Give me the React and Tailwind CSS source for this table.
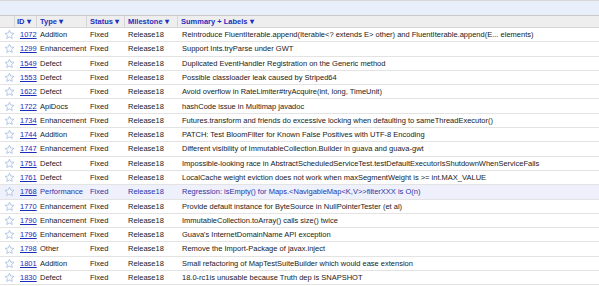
import React from "react";

const rows = [
  ["1072", "Addition", "Reintroduce FluentIterable.append(Iterable<? extends E> other) and FluentIterable.append(E... elements)"],
  ["1299", "Enhancement", "Support Ints.tryParse under GWT"],
  ["1549", "Defect", "Duplicated EventHandler Registration on the Generic method"],
  ["1553", "Defect", "Possible classloader leak caused by Striped64"],
  ["1622", "Defect", "Avoid overflow in RateLimiter#tryAcquire(int, long, TimeUnit)"],
  ["1722", "ApiDocs", "hashCode issue in Multimap javadoc"],
  ["1734", "Enhancement", "Futures.transform and friends do excessive locking when defaulting to sameThreadExecutor()"],
  ["1744", "Addition", "PATCH: Test BloomFilter for Known False Positives with UTF-8 Encoding"],
  ["1747", "Enhancement", "Different visibility of ImmutableCollection.Builder in guava and guava-gwt"],
  ["1751", "Defect", "Impossible-looking race in AbstractScheduledServiceTest.testDefaultExecutorIsShutdownWhenServiceFails"],
  ["1761", "Defect", "LocalCache weight eviction does not work when maxSegmentWeight is >= int.MAX_VALUE"],
  ["1768", "Performance", "Regression: isEmpty() for Maps.<NavigableMap<K,V>>filterXXX is O(n)", true],
  ["1770", "Enhancement", "Provide default instance for ByteSource in NullPointerTester (et al)"],
  ["1790", "Enhancement", "ImmutableCollection.toArray() calls size() twice"],
  ["1796", "Enhancement", "Guava's InternetDomainName API exception"],
  ["1798", "Other", "Remove the Import-Package of javax.inject"],
  ["1801", "Addition", "Small refactoring of MapTestSuiteBuilder which would ease extension"],
  ["1830", "Defect", "18.0-rc1is unusable because Truth dep is SNAPSHOT"],
];

function Star() {
  return (
    <svg width="11" height="11" viewBox="0 0 24 24" className="block">
      <path
        d="M12 2.5l2.9 6.3 6.8.7-5.1 4.6 1.5 6.7L12 17.3l-6.1 3.5 1.5-6.7-5.1-4.6 6.8-.7z"
        fill="#fbfcff"
        stroke="#9fb8dc"
        strokeWidth="1.6"
        strokeLinejoin="round"
      />
    </svg>
  );
}

const cols = "grid grid-cols-[15px_22px_50px_38px_53px_1fr]";

export default function App() {
  return (
    <div
      className="w-[599px] h-[286px] overflow-hidden bg-white text-[7.5px] text-[#1a1a1a]"
      style={{ fontFamily: '"Liberation Sans", Arial, sans-serif' }}
    >
      <div className="h-[1px] bg-[#d8d8d8]" />
      <div className="h-[15px] bg-[#e8eefa] border-b border-[#c9c9c9]" />
      <div className={`${cols} h-[12px] bg-[#eeeeee] border-b border-[#d6d6d6] font-bold text-[#1f2fc0] items-center whitespace-nowrap`}>
        <div className="h-full border-r border-[#d6d6d6]" />
        <div className="h-full flex items-center pl-[2px] border-r border-[#d6d6d6]">ID ▾</div>
        <div className="h-full flex items-center pl-[3px] border-r border-[#d6d6d6]">Type ▾</div>
        <div className="h-full flex items-center pl-[3px] border-r border-[#d6d6d6]">Status ▾</div>
        <div className="h-full flex items-center pl-[3px] border-r border-[#d6d6d6]">Milestone ▾</div>
        <div className="h-full flex items-center pl-[3px]">Summary + Labels ▾</div>
      </div>
      {rows.map(([id, type, summary, hl]) => (
        <div
          key={id}
          className={`${cols} h-[14.3px] border-b border-[#e3e3e3] items-center whitespace-nowrap ${
            hl ? "bg-[#eef0fb] text-[#2b35a8]" : ""
          }`}
        >
          <div className="flex items-center justify-end">
            <Star />
          </div>
          <div className="pl-[5px]">
            <span className="underline text-[#1c2db8]">{id}</span>
          </div>
          <div className="pl-[3px]">{type}</div>
          <div className="pl-[3px]">Fixed</div>
          <div className="pl-[3px]">Release18</div>
          <div className="pl-[4px] overflow-hidden">{summary}</div>
        </div>
      ))}
    </div>
  );
}
